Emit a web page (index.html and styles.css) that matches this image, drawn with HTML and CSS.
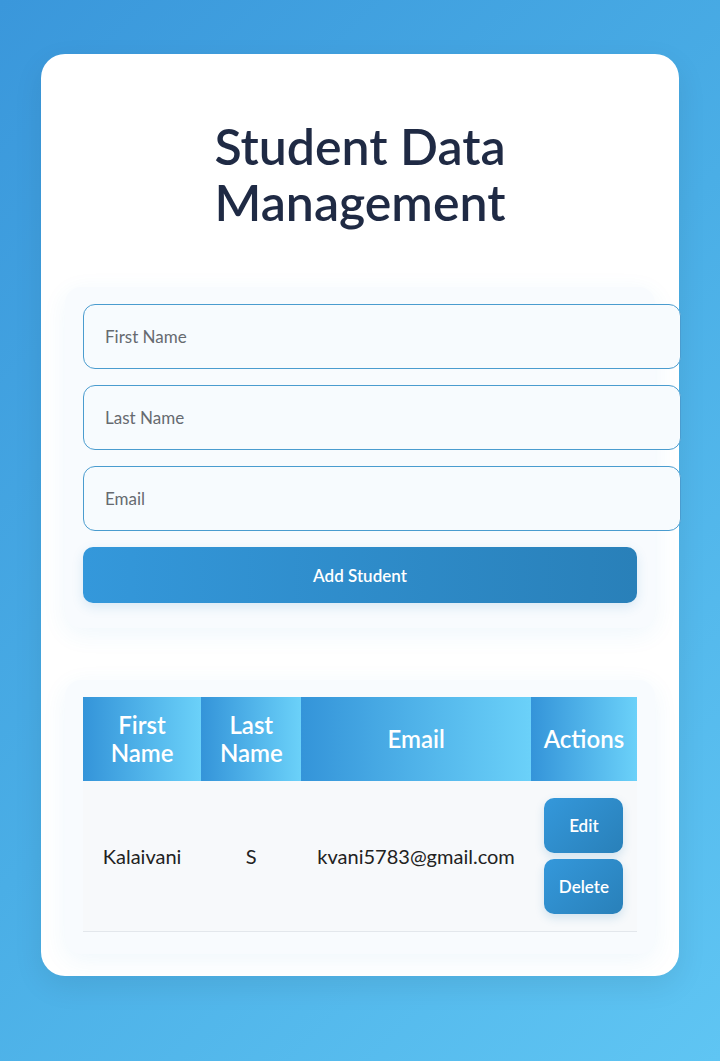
FILE: index.html
```html
<!DOCTYPE html>
<html lang="en">
<head>
<meta charset="utf-8">
<title>Student Data Management</title>
<link rel="stylesheet" href="styles.css">
</head>
<body>
<div class="card">
  <h1 class="title">Student Data Management</h1>
  <form class="panel form-panel">
    <input class="field" type="text" placeholder="First Name">
    <input class="field" type="text" placeholder="Last Name">
    <input class="field" type="email" placeholder="Email">
    <button class="btn-add" type="button">Add Student</button>
  </form>
  <div class="panel table-panel">
    <table class="students">
      <thead>
        <tr>
          <th class="c-first">First Name</th>
          <th class="c-last">Last Name</th>
          <th class="c-email">Email</th>
          <th class="c-actions">Actions</th>
        </tr>
      </thead>
      <tbody>
        <tr>
          <td>Kalaivani</td>
          <td>S</td>
          <td>kvani5783@gmail.com</td>
          <td class="actions">
            <button class="btn-small" type="button">Edit</button>
            <button class="btn-small" type="button">Delete</button>
          </td>
        </tr>
      </tbody>
    </table>
  </div>
</div>
</body>
</html>
```
FILE: styles.css
```css
* { box-sizing: content-box; }
html, body { margin: 0; height: 100%; }
body {
  background: linear-gradient(135deg, #3a97db 0%, #4aaee6 50%, #5fc5f3 100%);
  font-family: Lato, "Noto Sans", sans-serif;
  padding: 54px 41px 0;
  box-sizing: border-box;
  min-height: 1061px;
}
.card {
  background: #ffffff;
  border-radius: 24px;
  padding: 64px 24px 22px;
  box-shadow: 0 10px 30px rgba(0,0,0,0.08);
}
.title {
  margin: 0 auto 57px;
  max-width: 340px;
  text-align: center;
  font-size: 50px;
  line-height: 56px;
  font-weight: 600;
  color: #1f2a44;
}
.panel {
  background: #f8fbfe;
  border-radius: 16px;
  padding: 17px 18px;
  box-shadow: 0 6px 24px rgba(52,152,219,0.08);
}
.form-panel {
  display: flex;
  flex-direction: column;
  gap: 16px;
  margin: 0 0 52px;
  padding-bottom: 25px;
}
.field {
  display: block;
  width: 554px;
  height: 63px;
  padding: 0 21px;
  border: 1px solid #4a9ccf;
  border-radius: 12px;
  background: #f7fbfe;
  font-family: inherit;
  font-size: 17px;
  color: #333;
  outline: none;
}
.field::placeholder { color: #666a70; }
.btn-add {
  box-sizing: border-box;
  height: 56px;
  border: none;
  border-radius: 10px;
  background: linear-gradient(90deg, #3498db, #2980b9);
  color: #fff;
  font-family: inherit;
  font-size: 17px;
  font-weight: 600;
  box-shadow: 0 4px 12px rgba(41,128,185,0.15);
}
.table-panel { padding-bottom: 22px; }
.students {
  width: 100%;
  border-collapse: collapse;
}
.students th {
  height: 84px;
  padding: 0 8px;
  background: linear-gradient(90deg, #3494d9, #6bd1f9);
  color: #fff;
  font-size: 24px;
  line-height: 28px;
  font-weight: 600;
  text-align: center;
}
.c-first { width: 102px; }
.c-last { width: 84px; }
.c-email { width: 213px; }
.c-actions { width: 90px; }
.students td {
  height: 150px;
  padding: 0 8px;
  background: #f7f9fb;
  border-bottom: 1px solid #e3e7ec;
  text-align: center;
  font-size: 20px;
  color: #222;
}
.actions { vertical-align: middle; }
.btn-small {
  box-sizing: border-box;
  display: block;
  width: 79px;
  height: 55px;
  padding: 0;
  margin: 0 auto;
  border: none;
  border-radius: 10px;
  background: linear-gradient(135deg, #3498db, #2980b9);
  color: #fff;
  font-family: inherit;
  font-size: 17px;
  font-weight: 600;
  box-shadow: 0 4px 10px rgba(41,128,185,0.18);
}
.btn-small + .btn-small { margin-top: 6px; }
```
